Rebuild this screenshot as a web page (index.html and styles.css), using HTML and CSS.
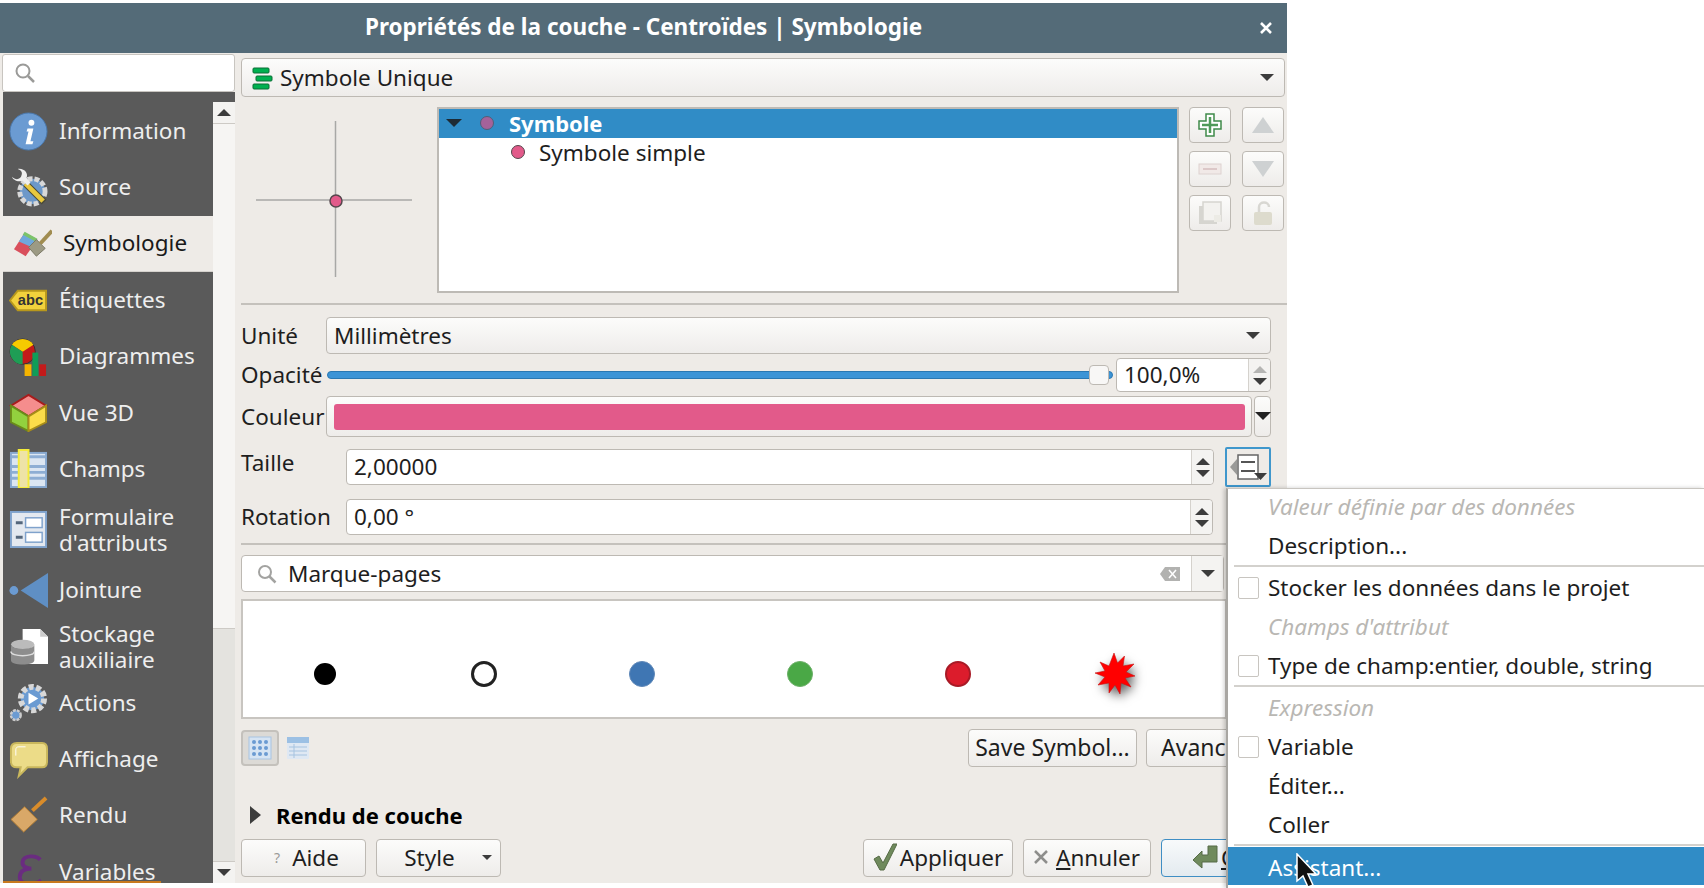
FILE: index.html
```html
<!DOCTYPE html>
<html>

<head>
    <title>Propriétés de la couche</title>
    <link rel="stylesheet" href="styles.css">
</head>

<body>
    <div class="dialog">
        <div class="titlebar">
            <span class="title">Propriétés de la couche - Centroïdes | Symbologie</span>
            <svg class="close" width="14" height="14" viewBox="0 0 14 14"><path d="M2 2l10 10M12 2L2 12" stroke="#fff" stroke-width="2.6"/></svg>
        </div>

        <div class="content">
            <div class="sidebar">
                <div class="side-search">
                    <svg width="24" height="24" viewBox="0 0 24 24"><circle cx="10" cy="10" r="6.5" fill="none" stroke="#9a9a98" stroke-width="2"/><path d="M15 15l6 6" stroke="#9a9a98" stroke-width="2.5"/></svg>
                </div>
                <div class="side-body">
                    <div class="nav">
                        <div class="nav-item">
                            <svg class="nav-icon" viewBox="0 0 40 40"><circle cx="20" cy="20" r="19" fill="#6b9bd2" stroke="#4a78ad"/><circle cx="23" cy="11" r="3" fill="#fff"/><path d="M19 17h6l-3 13h3l-1 3h-7l3-13h-2z" fill="#fff"/></svg>
                            <span>Information</span>
                        </div>
                        <div class="nav-item">
                            <svg class="nav-icon" viewBox="0 0 40 40"><circle cx="24" cy="24" r="13" fill="#6c98c9" stroke="#d8d8d8" stroke-width="5" stroke-dasharray="5 2"/><path d="M17 16l19 19" stroke="#4a4a38" stroke-width="7"/><path d="M17 16l18 18" stroke="#e9c83f" stroke-width="5"/><path d="M3 9c4 4 9 3 10-2 1-3-1-5-4-6 7-1 11 5 9 9l4 5-3 3-5-5c-5 2-10-1-11-4z" fill="#eee"/></svg>
                            <span>Source</span>
                        </div>
                        <div class="nav-item active">
                            <svg class="nav-icon" viewBox="0 0 40 40"><path d="M1 26l11-17 13 7-12 17z" fill="#d94f5c"/><path d="M6 18l6-9 13 7-5 8z" fill="#6fa8dc"/><path d="M10 11l2-3 13 7-2 3z" fill="#7cc36a"/><path d="M16 24l8-8 9 9-9 8z" fill="#9c9a84" stroke="#7a7866"/><path d="M28 20l12-13" stroke="#a08c50" stroke-width="4"/></svg>
                            <span>Symbologie</span>
                        </div>
                        <div class="nav-item">
                            <svg class="nav-icon" viewBox="0 0 40 40"><path d="M9 10h29v20H9l-8-10z" fill="#f2d13c" stroke="#b8981c" stroke-width="2"/><text x="22" y="25" class="abc">abc</text></svg>
                            <span>Étiquettes</span>
                        </div>
                        <div class="nav-item">
                            <svg class="nav-icon" viewBox="0 0 40 40"><circle cx="14" cy="15" r="13" fill="#c21a1a" stroke="#333"/><path d="M14 15L3 8a13 13 0 0 1 22 0z" fill="#f6cb00"/><path d="M14 15L3 8a13 13 0 0 0 11 20z" fill="#1f9d55"/><rect x="16" y="28" width="7" height="12" fill="#f5b400"/><rect x="24" y="16" width="6" height="24" fill="#0f9d58"/><rect x="31" y="28" width="7" height="12" fill="#c21a1a"/></svg>
                            <span>Diagrammes</span>
                        </div>
                        <div class="nav-item">
                            <svg class="nav-icon" viewBox="0 0 40 40"><path d="M20 2l18 11-18 11L2 13z" fill="#f58d8d" stroke="#a81c1c" stroke-width="2"/><path d="M2 13l18 11v15L2 30z" fill="#92d13e" stroke="#6a8a1a" stroke-width="2"/><path d="M38 13L20 24v15l18-9z" fill="#fbdc4a" stroke="#a68c1a" stroke-width="2"/></svg>
                            <span>Vue 3D</span>
                        </div>
                        <div class="nav-item">
                            <svg class="nav-icon" viewBox="0 0 40 40"><rect x="2" y="4" width="36" height="35" fill="#dce6f2" stroke="#87a8cf" stroke-width="2"/><path d="M3 8h34M3 18h34M3 24h34M3 30h34" stroke="#8eaed4" stroke-width="3"/><rect x="10" y="1" width="10" height="39" fill="#eee3a6" stroke="#f4ec3a" stroke-width="2"/></svg>
                            <span>Champs</span>
                        </div>
                        <div class="nav-item tall">
                            <svg class="nav-icon" viewBox="0 0 40 40"><rect x="2" y="2" width="36" height="36" fill="#e4e9f0" stroke="#7fa2cc" stroke-width="2"/><rect x="17" y="8" width="17" height="10" fill="#fff" stroke="#7fa2cc" stroke-width="1.5"/><rect x="17" y="23" width="17" height="10" fill="#fff" stroke="#7fa2cc" stroke-width="1.5"/><path d="M7 13h7M7 28h7" stroke="#55677c" stroke-width="3"/></svg>
                            <span>Formulaire<br>d'attributs</span>
                        </div>
                        <div class="nav-item">
                            <svg class="nav-icon" viewBox="0 0 40 40"><circle cx="5" cy="20" r="4.5" fill="#6b9bd2"/><path d="M12 20L40 2v36z" fill="#5f8fc4"/></svg>
                            <span>Jointure</span>
                        </div>
                        <div class="nav-item">
                            <svg class="nav-icon" viewBox="0 0 40 40"><path d="M14 2h18l8 8v28H14z" fill="#fff"/><path d="M32 2v8h8" fill="#ccc"/><ellipse cx="14" cy="18" rx="12" ry="5" fill="#bbb"/><path d="M2 18v16c0 6 24 6 24 0V18c0 6-24 6-24 0z" fill="#8d8d8d"/><path d="M2 25c0 6 24 6 24 0" fill="none" stroke="#ddd" stroke-width="1.5"/></svg>
                            <span>Stockage<br>auxiliaire</span>
                        </div>
                        <div class="nav-item">
                            <svg class="nav-icon" viewBox="0 0 40 40"><circle cx="24" cy="16" r="12" fill="#6b9bd2" stroke="#d8d8d8" stroke-width="6" stroke-dasharray="5 2.5"/><path d="M20 10l10 6-10 6z" fill="#fff"/><circle cx="7" cy="33" r="5" fill="#6b9bd2" stroke="#ccc" stroke-width="2.5" stroke-dasharray="3 1"/></svg>
                            <span>Actions</span>
                        </div>
                        <div class="nav-item">
                            <svg class="nav-icon" viewBox="0 0 40 40"><path d="M8 3h26c4 0 5 3 5 6v13c0 4-2 6-5 6H19l-9 9 2-9H8c-4 0-6-2-6-6V9c0-4 2-6 6-6z" fill="#ecdc88" stroke="#c9b75c" stroke-width="2"/><path d="M7 16V10c0-2 1-3 3-3h7" stroke="#fff" fill="none"/></svg>
                            <span>Affichage</span>
                        </div>
                        <div class="nav-item">
                            <svg class="nav-icon" viewBox="0 0 40 40"><path d="M2 24l14-13 13 13-14 13z" fill="#d9a868" stroke="#b07b34"/><path d="M24 15L38 2" stroke="#d98c2a" stroke-width="4"/></svg>
                            <span>Rendu</span>
                        </div>
                        <div class="nav-item">
                            <svg class="nav-icon" viewBox="0 0 40 40"><path d="M32 8c-4-5-17-5-18 2-1 5 5 7 9 7-6 0-12 2-12 9 0 8 14 9 22 3" fill="none" stroke="#6a2c80" stroke-width="4"/></svg>
                            <span>Variables</span>
                        </div>
                    </div>
                    <div class="side-scroll">
                        <div class="scroll-btn"><i class="tri up"></i></div>
                        <div class="scroll-handle"></div>
                        <div class="scroll-track"></div>
                        <div class="scroll-btn"><i class="tri down"></i></div>
                    </div>
                </div>
            </div>

            <div class="main">
                <div class="field combo type-combo">
                    <svg width="22" height="24" viewBox="0 0 22 24"><rect x="1" y="2" width="16" height="5" rx="1" fill="#00b050" stroke="#0a6e35"/><rect x="4" y="10" width="16" height="5" rx="1" fill="#00b050" stroke="#0a6e35"/><rect x="1" y="18" width="16" height="5" rx="1" fill="#00b050" stroke="#0a6e35"/></svg>
                    <span class="grow">Symbole Unique</span>
                    <i class="tri down"></i>
                </div>

                <div class="symbol-top">
                    <div class="preview">
                        <svg width="196" height="184" viewBox="0 0 196 184"><path d="M15 92h156M94.500 13v156" stroke="#a8a8a6" stroke-width="1.500"/><circle cx="95" cy="93" r="6" fill="#e25a8a" stroke="#55464c" stroke-width="1.500"/></svg>
                    </div>
                    <div class="tree">
                        <div class="tree-row selected">
                            <i class="tri down dark"></i>
                            <i class="dot dim"></i>
                            <b>Symbole</b>
                        </div>
                        <div class="tree-row child">
                            <i class="dot"></i>
                            <span>Symbole simple</span>
                        </div>
                    </div>
                    <div class="tool-grid">
                        <div class="btn tool"><svg width="24" height="24" viewBox="0 0 24 24"><path d="M8 1h8v7h7v8h-7v7H8v-7H1V8h7z" fill="#fff" stroke="#3f8a4a" stroke-width="1.500"/><path d="M12 4v16M4 12h16" stroke="#4f9a58" stroke-width="2.500"/></svg></div>
                        <div class="btn tool"><svg width="24" height="20" viewBox="0 0 24 20"><path d="M12 2l11 16H1z" fill="#ced1d2"/></svg></div>
                        <div class="btn tool"><svg width="24" height="12" viewBox="0 0 24 12"><rect x="1" y="1" width="22" height="10" fill="#f1e9e7" stroke="#ddd2d0"/><path d="M5 6h14" stroke="#dcc8c8" stroke-width="2"/></svg></div>
                        <div class="btn tool"><svg width="24" height="20" viewBox="0 0 24 20"><path d="M1 2h22L12 18z" fill="#ced1d2"/></svg></div>
                        <div class="btn tool"><svg width="24" height="24" viewBox="0 0 24 24"><path d="M1 5h4v14h14v4H1z" fill="#d6d5d0"/><rect x="5" y="1" width="18" height="19" fill="#f3f2ef" stroke="#d6d5d0" stroke-width="1.500"/><rect x="16" y="14" width="7" height="7" fill="#ecebe5"/></svg></div>
                        <div class="btn tool"><svg width="22" height="26" viewBox="0 0 22 26"><path d="M7 12V7c0-6 10-6 10 0" fill="none" stroke="#d8d7d2" stroke-width="2.500"/><rect x="2" y="12" width="18" height="13" rx="2" fill="#dddbcd"/></svg></div>
                    </div>
                </div>

                <div class="sep top-sep"></div>

                <div class="form-row unit-row">
                    <label class="lbl">Unité</label>
                    <div class="field combo grow">
                        <span class="grow">Millimètres</span>
                        <i class="tri down"></i>
                    </div>
                </div>

                <div class="form-row opacity-row">
                    <label class="lbl">Opacité</label>
                    <div class="slider grow">
                        <div class="slider-fill"></div>
                        <div class="slider-handle"></div>
                    </div>
                    <div class="field spin opacity-spin">
                        <span class="grow">100,0%</span>
                        <div class="spin-btns"><i class="tri up faded"></i><i class="tri down"></i></div>
                    </div>
                </div>

                <div class="form-row color-row">
                    <label class="lbl">Couleur</label>
                    <div class="btn color-btn grow"><div class="color-fill"></div></div>
                    <div class="btn color-drop"><i class="tri down black"></i></div>
                </div>

                <div class="form-row size-row">
                    <label class="lbl wide handle-lbl">Taille</label>
                    <div class="field spin grow">
                        <span class="grow">2,00000</span>
                        <div class="spin-btns"><i class="tri up"></i><i class="tri down"></i></div>
                    </div>
                    <div class="dd-btn">
                        <svg width="40" height="32" viewBox="0 0 40 32"><path d="M2 16l7-8v16z" fill="#9a9a98"/><rect x="10" y="4" width="20" height="24" fill="#fff" stroke="#666" stroke-width="1.500"/><path d="M13 11h14M13 20h14" stroke="#555" stroke-width="2"/><path d="M26 22h13l-6.500 7z" fill="#3c3c3c"/></svg>
                    </div>
                </div>

                <div class="form-row rotation-row">
                    <label class="lbl wide">Rotation</label>
                    <div class="field spin rotation-spin">
                        <span class="grow">0,00 °</span>
                        <div class="spin-btns"><i class="tri up"></i><i class="tri down"></i></div>
                    </div>
                </div>

                <div class="sep mid-sep"></div>

                <div class="field bookmark-search">
                    <svg width="22" height="22" viewBox="0 0 22 22"><circle cx="9" cy="9" r="6" fill="none" stroke="#a3a3a1" stroke-width="2"/><path d="M13.500 13.500l6 6" stroke="#a3a3a1" stroke-width="2.500"/></svg>
                    <span class="grow">Marque-pages</span>
                    <svg width="22" height="16" viewBox="0 0 22 16"><path d="M6 1h15v14H6l-5-7z" fill="#b2b2b0"/><path d="M10 4l7 8M17 4l-7 8" stroke="#fff" stroke-width="1.500"/></svg>
                    <div class="search-drop"><i class="tri down"></i></div>
                </div>

                <div class="symbol-list">
                    <i class="mark black"></i>
                    <i class="mark hollow"></i>
                    <i class="mark blue"></i>
                    <i class="mark green"></i>
                    <i class="mark red"></i>
                    <svg class="star" width="44" height="44" viewBox="0 0 44 44"><path d="M22 1l3.500 10 7-7-1.500 10 11-2-8 8 9 4-10 2 6 9-10-4-1 11-5-9-6 8 0-10-11 2 7-8-10-4 10-2-5-9 9 4z" fill="#f00" stroke="#c41414" stroke-width=".6"/></svg>
                </div>

                <div class="lib-row">
                    <div class="view-btn">
                        <svg width="24" height="24" viewBox="0 0 24 24"><rect x="1" y="1" width="22" height="22" fill="#d6e4f3" stroke="#a8c4e2"/><g fill="#6b9bd2"><circle cx="6" cy="6" r="2"/><circle cx="12" cy="6" r="2"/><circle cx="18" cy="6" r="2"/><circle cx="6" cy="12" r="2"/><circle cx="12" cy="12" r="2"/><circle cx="18" cy="12" r="2"/><circle cx="6" cy="18" r="2"/><circle cx="12" cy="18" r="2"/><circle cx="18" cy="18" r="2"/></g></svg>
                    </div>
                    <svg class="list-view" width="22" height="22" viewBox="0 0 22 22"><rect x="0" y="0" width="22" height="22" rx="1" fill="#dfe8f3"/><rect x="0" y="0" width="22" height="6" fill="#9cc0e4"/><path d="M2 10h18M2 14h18M2 18h18M7 7v14" stroke="#a6c3e0"/></svg>
                    <div class="btn save-btn">Save Symbol...</div>
                    <div class="btn adv-btn">Avancé</div>
                </div>

                <div class="render-row">
                    <i class="tri right"></i>
                    <b>Rendu de couche</b>
                </div>

                <div class="bottom-row">
                    <div class="btn help-btn"><span class="help-mark">?</span>Aide</div>
                    <div class="btn style-btn"><span class="grow">Style</span><i class="tri down small"></i></div>
                    <div class="btn apply-btn">
                        <svg width="24" height="28" viewBox="0 0 24 28"><path d="M1 16l5-3 4 7L20 1h4L11 27H7z" fill="#6f8a5c" stroke="#566b46"/></svg>
                        Appliquer
                    </div>
                    <div class="btn cancel-btn">
                        <svg width="14" height="14" viewBox="0 0 14 14"><path d="M1 1l12 12M13 1L1 13" stroke="#8e8e8c" stroke-width="2.500"/></svg>
                        <span><u>A</u>nnuler</span>
                    </div>
                    <div class="btn ok-btn">
                        <svg width="26" height="26" viewBox="0 0 26 26"><path d="M1 16l9-9v4h6V2h9v16H10v6z" fill="#6f8a5c" stroke="#566b46"/></svg>
                        <span><u>O</u>K</span>
                    </div>
                </div>
            </div>
        </div>
    </div>

    <!-- menu sits on top of the dialog -->
    <div class="menu">
        <div class="menu-item off first">Valeur définie par des données</div>
        <div class="menu-item">Description...</div>
        <div class="menu-sep"></div>
        <div class="menu-item"><i class="check"></i>Stocker les données dans le projet</div>
        <div class="menu-item off">Champs d'attribut</div>
        <div class="menu-item"><i class="check"></i>Type de champ:entier, double, string</div>
        <div class="menu-sep"></div>
        <div class="menu-item off">Expression</div>
        <div class="menu-item"><i class="check"></i>Variable</div>
        <div class="menu-item">Éditer...</div>
        <div class="menu-item">Coller</div>
        <div class="menu-sep"></div>
        <div class="menu-item current">Assistant...</div>
    </div>

    <svg class="cursor" width="22" height="36" viewBox="0 0 22 36"><path d="M1 1v27l6-5 5 11 5-2-5-11h8z" fill="#111" stroke="#fff" stroke-width="1.500"/></svg>
</body>

</html>
```

FILE: styles.css
```css
* {
    box-sizing: border-box;
}

body {
    margin: 0;
    height: 888px;
    overflow: hidden;
    background-color: #ffffff;
    font-family: "Noto Sans", sans-serif;
    font-size: 22.500px;
    color: #1e1e1e;
}

i {
    display: block;
    flex: none;
}

.grow {
    flex: 1;
    min-width: 0;
}

.dialog {
    width: 1287px;
    height: 880px;
    margin-top: 3px;
    background-color: #eeebe7;
    overflow: hidden;
}

.titlebar {
    display: flex;
    align-items: center;
    justify-content: center;
    position: relative;
    height: 50px;
    padding-bottom: 4px;
    background-color: #546b78;
    color: #fff;
    font-weight: bold;
}

.close {
    position: absolute;
    right: 14px;
    top: 18px;
}

.content {
    display: flex;
    height: 830px;
}

/* left side */
.sidebar {
    width: 235px;
    padding-top: 1px;
    flex: none;
}

.side-search {
    display: flex;
    align-items: center;
    height: 38px;
    margin-left: 2px;
    padding-left: 10px;
    background-color: #fff;
    border: 1px solid #c8c5c0;
    border-radius: 3px;
}

.side-body {
    display: flex;
    height: 791px;
    margin-left: 3px;
    background-color: #5a5a5a;
    padding-top: 10px;
}

.nav {
    position: relative;
    width: 210px;
    margin-top: -10px;
    padding-top: 11px;
    overflow: hidden;
    background-color: #5a5a5a;
    color: #eeeeee;
}

.nav::after {
    content: "";
    position: absolute;
    left: 0;
    bottom: 0;
    width: 158px;
    height: 2px;
    background-color: #c87a1e;
}

.nav-item {
    display: flex;
    align-items: center;
    height: 56.300px;
    padding-left: 6px;
    line-height: 26px;
}

.nav-item.tall {
    height: 65px;
}

.nav-item.active {
    padding-left: 10px;
    background-color: #eeebe7;
    color: #1a1a1a;
    border-bottom: 1px solid #d5d2cd;
}

.nav-icon {
    width: 39px;
    height: 39px;
    margin-right: 11px;
    flex: none;
}

.abc {
    font-family: "Liberation Sans", sans-serif;
    font-size: 15px;
    font-weight: bold;
    text-anchor: middle;
    fill: #333;
}

.side-scroll {
    display: flex;
    flex-direction: column;
    width: 22px;
    background-color: #f4f3f1;
}

.scroll-btn {
    display: flex;
    align-items: center;
    justify-content: center;
    height: 22px;
    background-color: #f4f3f1;
    border-bottom: 1px solid #cdcac5;
}

.side-scroll .scroll-btn:last-child {
    border-bottom: 0;
    border-top: 1px solid #cdcac5;
}

.scroll-handle {
    height: 504px;
    background-color: #f6f5f3;
}

.scroll-track {
    flex: 1;
    background-color: #e4e3df;
    border-top: 1px solid #cdcac5;
}

/* little arrows */
.tri {
    width: 0;
    height: 0;
    border-left: 7px solid transparent;
    border-right: 7px solid transparent;
}

.tri.down {
    border-top: 7px solid #3c3c3c;
}

.tri.up {
    border-bottom: 7px solid #3c3c3c;
}

.tri.right {
    border-top: 9px solid transparent;
    border-bottom: 9px solid transparent;
    border-left: 11px solid #3c3c3c;
    border-right: 0;
}

.tri.faded {
    border-bottom-color: #b5b5b3;
}

.tri.dark {
    border-left-width: 8px;
    border-right-width: 8px;
    border-top: 8px solid #1d2b35;
}

.tri.black {
    border-left-width: 8px;
    border-right-width: 8px;
    border-top: 8px solid #222;
}

.tri.small {
    border-left-width: 5px;
    border-right-width: 5px;
    border-top-width: 5px;
}

/* right side */
.main {
    flex: 1;
    min-width: 0;
    padding-left: 6px;
}

.field {
    display: flex;
    align-items: center;
    height: 36px;
    padding-left: 7px;
    background-color: #fff;
    border: 1px solid #bdb9b3;
    border-radius: 4px;
}

.field > span {
    padding-bottom: 1px;
}

.combo {
    padding-right: 10px;
    background-image: linear-gradient(#fcfcfb, #eeecea);
}

.type-combo {
    width: 1044px;
    height: 39px;
    margin-top: 5px;
    gap: 6px;
    padding-left: 10px;
}

.btn {
    display: flex;
    align-items: center;
    justify-content: center;
    padding-bottom: 2px;
    background-image: linear-gradient(#fcfcfb, #eeecea);
    border: 1px solid #bdb9b3;
    border-radius: 4px;
}

.btn.tool {
    padding-bottom: 0;
}

.symbol-top {
    display: flex;
    height: 186px;
    margin-top: 10px;
}

.preview {
    width: 196px;
    padding-top: 1px;
    flex: none;
}

.tree {
    width: 742px;
    flex: none;
    background-color: #fff;
    border: 2px solid #bdbab5;
}

.tree-row {
    display: flex;
    align-items: center;
    height: 30px;
    padding-bottom: 2px;
}

.tree-row b {
    font-size: 22px;
}

.tree-row.selected {
    height: 29px;
    padding-left: 7px;
    background-color: #308cc6;
    color: #fff;
}

.tree-row.child {
    padding-left: 72px;
}

.dot {
    width: 14px;
    height: 14px;
    border-radius: 50%;
    background-color: #e25a8a;
    border: 1.500px solid #55464c;
}

.tree-row.selected .dot {
    margin-left: 18px;
    margin-right: 15px;
    background-color: #a4629a;
    border-color: #4f5f78;
}

.tree-row.child .dot {
    margin-right: 14px;
}

.tool-grid {
    display: grid;
    grid-template-columns: 42px 42px;
    grid-auto-rows: 36px;
    gap: 8px 11px;
    margin-left: 10px;
}

.sep {
    height: 2px;
    background-color: #c4c1bc;
}

.top-sep {
    margin-top: 10px;
}

.mid-sep {
    margin-top: 8px;
}

.form-row {
    display: flex;
    align-items: center;
    padding-right: 16px;
}

.lbl {
    width: 85px;
    flex: none;
    padding-bottom: 1px;
    white-space: nowrap;
}

.lbl.wide {
    width: 105px;
}

.handle-lbl {
    align-self: flex-start;
    padding-bottom: 0;
    line-height: 32px;
}

.unit-row {
    height: 37px;
    margin-top: 12px;
}

.unit-row .field {
    height: 37px;
}

.opacity-row {
    height: 34px;
    margin-top: 4px;
}

.slider {
    position: relative;
    height: 8px;
    margin-left: 1px;
    margin-right: 3px;
}

.slider-fill {
    height: 8px;
    background-color: #3c94d6;
    border: 1px solid #2a78b2;
    border-radius: 4px;
}

.slider-handle {
    position: absolute;
    right: 4px;
    top: -6px;
    width: 20px;
    height: 20px;
    background-color: #f8f7f6;
    border: 1px solid #bdb9b3;
    border-radius: 4px;
}

.opacity-spin {
    width: 155px;
    height: 34px;
    flex: none;
}

.spin-btns {
    display: flex;
    flex-direction: column;
    align-items: center;
    justify-content: center;
    gap: 5px;
    width: 22px;
    height: 100%;
    border-left: 1px solid #d5d2cd;
    background-color: #f4f3f1;
    border-radius: 0 4px 4px 0;
}

.color-row {
    height: 41px;
    margin-top: 4px;
}

.color-btn {
    height: 41px;
    padding: 7px 6px 7px 7px;
}

.color-fill {
    width: 100%;
    height: 26px;
    background-color: #e25a8a;
    border-radius: 3px;
}

.color-drop {
    width: 17px;
    height: 41px;
    margin-left: 2px;
    flex: none;
}

.size-row {
    height: 40px;
    margin-top: 10px;
}

.dd-btn {
    display: flex;
    align-items: center;
    justify-content: center;
    width: 46px;
    height: 40px;
    margin-left: 11px;
    flex: none;
    border: 2px solid #3f97cc;
    border-radius: 2px;
}

.rotation-row {
    height: 36px;
    margin-top: 12px;
}

.rotation-spin {
    width: 867px;
    flex: none;
}

.bookmark-search {
    width: 983px;
    height: 37px;
    margin-top: 10px;
    padding-left: 14px;
    padding-right: 0;
    gap: 10px;
}

.search-drop {
    display: flex;
    align-items: center;
    justify-content: center;
    width: 32px;
    height: 100%;
    flex: none;
    margin-left: 0;
    border-left: 1px solid #d5d2cd;
    background-color: #f4f3f1;
}

.symbol-list {
    display: flex;
    align-items: center;
    position: relative;
    width: 986px;
    height: 120px;
    margin-top: 7px;
    background-color: #fff;
    border: 2px solid #c8c5c0;
    padding-top: 30px;
    padding-left: 71px;
    gap: 132px;
}

.mark {
    width: 26px;
    height: 26px;
    border-radius: 50%;
}

.mark.black {
    width: 22px;
    height: 22px;
    background-color: #000;
    margin-right: 3px;
}

.mark.hollow {
    background-color: #fff;
    border: 3px solid #222;
}

.mark.blue {
    background-color: #3f76b3;
    border: 1px solid #5f88b8;
}

.mark.green {
    background-color: #4aa846;
    border: 1px solid #6cb068;
}

.mark.red {
    background-color: #dc1c2c;
    border: 2px solid #a81a26;
}

.star {
    flex: none;
    margin-left: -11px;
    filter: drop-shadow(3px 5px 5px rgba(0, 0, 0, 0.6));
}

.lib-row {
    display: flex;
    align-items: center;
    height: 38px;
    margin-top: 10px;
    padding-right: 11px;
    font-size: 23px;
}

.view-btn {
    display: flex;
    align-items: center;
    justify-content: center;
    width: 38px;
    height: 36px;
    background-color: #dcdad6;
    border: 2px solid #c4c1bc;
    border-radius: 4px;
}

.list-view {
    margin-left: 8px;
}

.save-btn {
    width: 169px;
    height: 38px;
    margin-left: auto;
    white-space: nowrap;
}

.adv-btn {
    width: 130px;
    height: 38px;
    margin-left: 9px;
    padding-left: 14px;
    justify-content: flex-start;
}

.render-row {
    display: flex;
    align-items: center;
    height: 30px;
    margin-top: 33px;
    padding-left: 9px;
    gap: 15px;
    color: #000;
}

.render-row b {
    font-size: 22px;
    padding-bottom: 1px;
}

.bottom-row {
    display: flex;
    height: 38px;
    margin-top: 9px;
    gap: 10px;
}

.help-btn,
.style-btn {
    width: 125px;
}

.help-mark {
    width: 18px;
    margin-right: 6px;
    color: #9a9a98;
    font-size: 14px;
    text-align: center;
}

.style-btn {
    padding-left: 0;
    padding-right: 8px;
    text-align: center;
}

.apply-btn {
    width: 150px;
    margin-left: auto;
    gap: 3px;
}

.cancel-btn {
    width: 128px;
    gap: 8px;
}

.ok-btn {
    width: 123px;
    margin-right: 3px;
    gap: 3px;
    justify-content: flex-start;
    padding-left: 30px;
    background-image: linear-gradient(#f8fafb, #e3eaef);
    border-color: #3f8ec4;
}

/* popup */
.menu {
    position: absolute;
    left: 1226px;
    top: 488px;
    width: 478px;
    height: 400px;
    background-color: #fff;
    border-left: 2px solid #a8a6a2;
    border-top: 1px solid #c8c5c0;
    box-shadow: -2px 0 4px rgba(0, 0, 0, 0.2);
}

.menu-item {
    display: flex;
    align-items: center;
    height: 39px;
    padding-left: 40px;
    padding-bottom: 1px;
    position: relative;
}

.menu-item.first {
    margin-top: -2px;
}

.menu-item.off {
    color: #b9b7b3;
    font-style: italic;
}

.menu-item.current {
    height: 38px;
    padding-top: 3px;
    padding-bottom: 0;
    background-color: #308cc6;
    color: #fff;
}

.menu-sep {
    height: 3px;
    margin-left: 6px;
    border-top: 2px solid #d3d1cd;
}

.check {
    position: absolute;
    left: 10px;
    top: 9px;
    width: 21px;
    height: 22px;
    background-color: #fff;
    border: 1.500px solid #c8c5c0;
    border-radius: 2px;
}

.cursor {
    position: absolute;
    left: 1296px;
    top: 853px;
}
```
